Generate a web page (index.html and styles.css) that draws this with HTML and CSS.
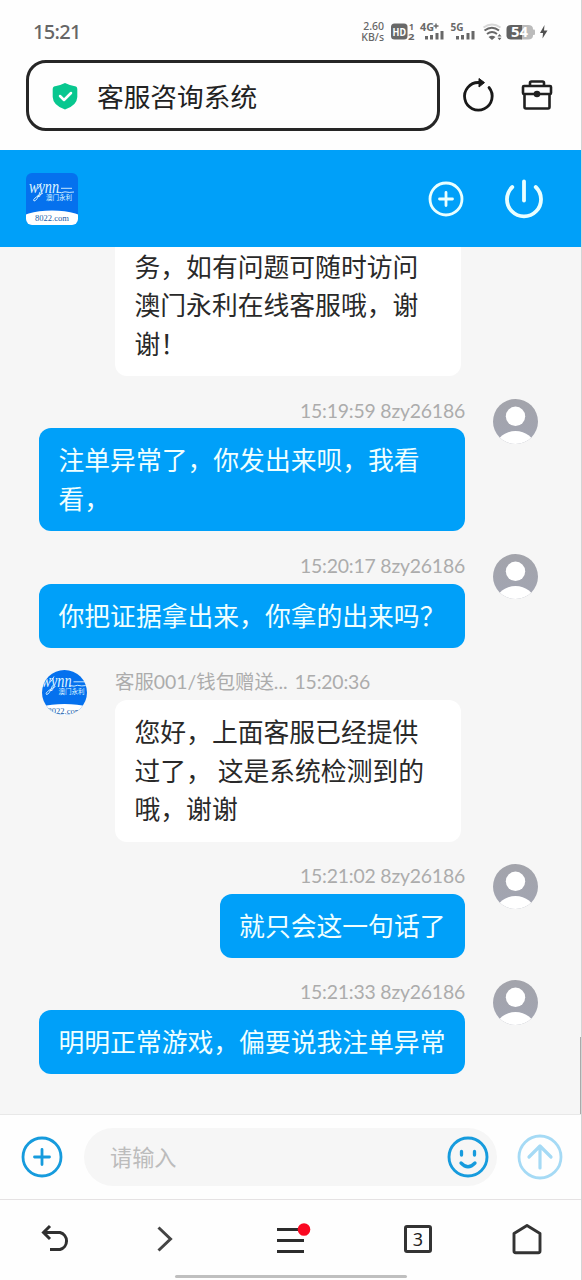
FILE: index.html
```html
<!DOCTYPE html>
<html lang="zh-CN">
<head>
<meta charset="utf-8">
<title>客服咨询系统</title>
<link rel="stylesheet" href="styles.css">
</head>
<body>
<svg width="0" height="0" class="defs">
  <defs>
    <linearGradient id="grey" x1="0" y1="0" x2="0" y2="1"><stop offset="0" stop-color="#a3a4ab"/><stop offset="1" stop-color="#a2a5b2"/></linearGradient>
    <clipPath id="round"><circle cx="22.5" cy="22.5" r="22.5"/></clipPath>
    <clipPath id="tile"><rect width="52" height="52" rx="6"/></clipPath>
    <symbol id="user" viewBox="0 0 45 45">
      <g clip-path="url(#round)"><rect width="45" height="45" fill="url(#grey)"/><circle cx="22.5" cy="17.3" r="9.7" fill="#fff"/><ellipse cx="22.5" cy="47" rx="19" ry="15" fill="#fff"/></g>
    </symbol>
    <symbol id="brand" viewBox="0 0 52 52">
      <rect width="52" height="52" fill="#0571ee"/>
      <ellipse cx="26" cy="48" rx="33" ry="10.5" fill="#fff"/>
      <text class="brand-script" x="3" y="20" textLength="30" lengthAdjust="spacingAndGlyphs">wynn</text>
      <path d="M14 19 Q11 28 8 28 Q5.500 26 17 20 M11.500 16 Q14 13 15.500 10 M31 19 Q36 20.500 39 18.800 Q43 20 48 19 M35 15.300 H46" fill="none" stroke="#dff5ff" stroke-width=".9"/>
      <text class="brand-cn" x="20" y="27" textLength="26">澳门永利</text>
      <text class="brand-site" x="9" y="47.500" textLength="34" lengthAdjust="spacingAndGlyphs">8022.com</text>
    </symbol>
  </defs>
</svg>
<div class="screen">
  <header class="status">
    <span class="clock">15:21</span>
    <span class="speed"><span>2.60</span><span>KB/s</span></span>
    <svg class="signals" width="170" height="26" viewBox="0 0 170 26">
      <g fill="#686868">
        <rect x="1" y="4.500" width="16.500" height="16" rx="3.500"/>
        <text x="2.500" y="16.500" fill="#fff" font-size="11" font-weight="700" textLength="13.500" lengthAdjust="spacingAndGlyphs">HD</text>
        <text x="19" y="10.500" font-size="8.500" font-weight="700">1</text>
        <text x="18" y="20.500" font-size="8.500" font-weight="700" textLength="6.500" lengthAdjust="spacingAndGlyphs">2</text>
        <text x="30" y="12" font-size="10.500" font-weight="700" textLength="14" lengthAdjust="spacingAndGlyphs">4G</text>
        <path d="M46 4.500v5M43.500 7h5" stroke="#686868" stroke-width="1.400"/>
        <path d="M35 17h3v3.500h-3zM40 16h3v4.500h-3zM45.500 14h3v6.500h-3zM50.500 12h3v8.500h-3z"/>
        <text x="60.500" y="12" font-size="10.500" font-weight="700" textLength="13" lengthAdjust="spacingAndGlyphs">5G</text>
        <path d="M66 17h3v3.500h-3zM71 16h3v4.500h-3zM76.500 14h3v6.500h-3zM81.500 12h3v8.500h-3z"/>
        <path d="M98.500 18 Q102 15.500 105.500 18 L102 21z"/>
        <path d="M107.500 17.500 l2-2.500 2 2.500z M107.500 18.800 l2 2.500 2-2.500z"/>
      </g>
      <path d="M93.500 8.500 Q102 2.500 110.500 8.500" fill="none" stroke="#d8d8d8" stroke-width="2"/>
      <path d="M94.500 11.500 Q102 6 109 11.500 M97 15 Q102 11 107 15" fill="none" stroke="#686868" stroke-width="2"/>
      <path d="M131 6 H138 q5 0 5 4 v6.500 q0 4-5 4 H131z" fill="#bbb"/>
      <rect x="142.500" y="10.500" width="2.500" height="5.500" rx="1" fill="#bbb"/>
      <path d="M132 6 H121 q-4.500 0-4.500 4 v6.500 q0 4 4.500 4 H132z" fill="#626262"/>
      <text x="121" y="18.200" fill="#fff" font-size="13.500" font-weight="700" textLength="17" lengthAdjust="spacingAndGlyphs">54</text>
      <path d="M154.500 6 L150 14 H153 L152.500 19.500 L157.500 11.500 H154z" fill="#505050"/>
    </svg>
  </header>
  <div class="address-row">
    <div class="address">
      <svg width="26" height="28" viewBox="0 0 26 28"><path d="M13 1 Q19 4 24 4.500 Q25.300 5 25.300 7 V15 Q25 23.500 13 27.500 Q1 23.500 .7 15 V7 Q.7 5 2 4.500 Q7 4 13 1z" fill="#08c78f"/><path d="M8 14 l4 4 7-7" fill="none" stroke="#fff" stroke-width="2.500" stroke-linecap="round" stroke-linejoin="round"/></svg>
      <span>客服咨询系统</span>
    </div>
    <svg class="reload" width="34" height="36" viewBox="0 0 34 36"><path d="M28 9.500 A13.800 13.800 0 1 1 18 4.500" fill="none" stroke="#191919" stroke-width="2.800" stroke-linecap="round"/><path d="M18 .5 L23.500 4.600 L18 9z" fill="#191919" stroke="#191919" stroke-linejoin="round"/></svg>
    <svg class="toolbox" width="32" height="32" viewBox="0 0 32 32"><g fill="none" stroke="#202020" stroke-width="2.600" stroke-linejoin="round"><path d="M9 7 V4 Q9 2.500 10.500 2.500 H21.500 Q23 2.500 23 4 V7"/><rect x="2" y="7" width="28" height="8" rx="1"/><path d="M3.500 15 V28 Q3.500 29.500 5 29.500 H27 Q28.500 29.500 28.500 28 V15"/></g><circle cx="16" cy="15" r="3.300" fill="#202020"/></svg>
  </div>
  <div class="service-bar">
    <svg class="tile" width="52" height="52"><g clip-path="url(#tile)"><use href="#brand" width="52" height="52"/></g></svg>
    <svg class="add" width="36" height="36" viewBox="0 0 36 36"><g fill="none" stroke="#e9ffff" stroke-width="2.800" stroke-linecap="round"><circle cx="18" cy="18" r="16"/><path d="M11.500 18h13M18 11.500v13"/></g></svg>
    <svg class="power" width="40" height="40" viewBox="0 0 40 40"><g fill="none" stroke="#e9ffff" stroke-width="3.800" stroke-linecap="round"><path d="M8.300 8 A17 17 0 1 0 31.700 8"/><path d="M20 2.500v19"/></g></svg>
  </div>
  <main class="chat">
    <div class="bubble agent first">务，如有问题可随时访问<br>澳门永利在线客服哦，谢<br>谢！</div>
    <section class="row mine"><div class="body"><div class="meta">15:19:59 8zy26186</div><div class="bubble wide">注单异常了，你发出来呗，我看<br>看，</div></div><svg class="avatar"><use href="#user"/></svg></section>
    <section class="row mine"><div class="body"><div class="meta">15:20:17 8zy26186</div><div class="bubble wide">你把证据拿出来，你拿的出来吗？</div></div><svg class="avatar"><use href="#user"/></svg></section>
    <section class="row theirs"><svg class="avatar"><g clip-path="url(#round)"><use href="#brand" x="-3.500" y="-3.500" width="52" height="52"/></g></svg><div class="body"><div class="meta"><span class="agent-name">客服001/钱包赠送...</span><span>15:20:36</span></div><div class="bubble agent">您好，上面客服已经提供<br>过了， 这是系统检测到的<br>哦，谢谢</div></div></section>
    <section class="row mine"><div class="body"><div class="meta">15:21:02 8zy26186</div><div class="bubble">就只会这一句话了</div></div><svg class="avatar"><use href="#user"/></svg></section>
    <section class="row mine"><div class="body"><div class="meta">15:21:33 8zy26186</div><div class="bubble wide">明明正常游戏，偏要说我注单异常</div></div><svg class="avatar"><use href="#user"/></svg></section>
  </main>
  <div class="composer">
    <svg width="42" height="42" viewBox="0 0 42 42"><g fill="none" stroke="#169bdd" stroke-width="2.800" stroke-linecap="round"><circle cx="21" cy="21" r="19"/><path d="M13.500 21h15M21 13.500v15"/></g></svg>
    <div class="field"><span>请输入</span>
      <svg width="42" height="42" viewBox="0 0 42 42"><g fill="none" stroke="#169bdd" stroke-width="2.900" stroke-linecap="round"><circle cx="21" cy="21" r="19"/><path d="M14.500 15.500v3.500M27.500 15.500v3.500M14 27 Q21 34.500 28 27" stroke-width="3.300"/></g></svg>
    </div>
    <svg class="send" width="46" height="46" viewBox="0 0 46 46"><g fill="none" stroke="#a5daf5" stroke-width="2.800" stroke-linecap="round" stroke-linejoin="round"><circle cx="23" cy="23" r="21"/><path d="M12 23 L23 12 L34 23M23 12v22" stroke-width="3.200"/></g></svg>
  </div>
  <nav class="tabs">
    <svg width="30" height="32" viewBox="0 0 30 32"><path d="M9 3 L2.500 9.500 L9 16 M3 9.500 H19 A8.800 8.800 0 0 1 19 26.500 H9" fill="none" stroke="#303030" stroke-width="3"/></svg>
    <svg class="forward" width="18" height="28" viewBox="0 0 18 28"><path d="M2.500 2.500 L14.500 14 L2.500 25.500" fill="none" stroke="#444" stroke-width="3"/></svg>
    <svg class="menu" width="36" height="36" viewBox="0 0 36 36"><path d="M1 8.500h27M1 19.500h27M1 30.500h27" stroke="#2c2c2c" stroke-width="3"/><circle cx="28" cy="8.500" r="6.300" fill="#fa0821"/></svg>
    <span class="count">3</span>
    <svg class="home" width="30" height="32" viewBox="0 0 30 32"><path d="M15 2.500 L28 10.500 V28 Q28 29.700 26.300 29.700 H3.700 Q2 29.700 2 28 V10.500z" fill="none" stroke="#333" stroke-width="2.900" stroke-linejoin="round"/></svg>
  </nav>
  <i class="home-bar"></i>
  <i class="scroll-thumb"></i>
</div>
</body>
</html>
```

FILE: styles.css
```css
* { box-sizing: border-box; }
body { margin: 0; font-family: Lato, "Noto Sans CJK SC", sans-serif; background: #fefefe; }
svg { display: block; flex: none; }
.defs { position: absolute; }
.screen { position: relative; width: 582px; height: 1280px; display: flex; flex-direction: column; overflow: hidden; border-right: 1px solid #d4d4d4; }
.status { height: 60px; flex: none; display: flex; align-items: flex-start; padding: 19px 0 0 33px; color: #666; }
.clock { font: 500 20px/25px "Noto Sans", sans-serif; width: 325px; letter-spacing: -.7px; }
.speed { width: 26px; display: flex; flex-direction: column; align-items: flex-end; font: 500 10.5px/10.5px "Noto Sans", sans-serif; margin-top: 2px; }
.signals { margin-left: 6px; font-family: "Noto Sans", sans-serif; }
.address-row { height: 90px; flex: none; display: flex; padding-left: 26px; }
.address { width: 414px; height: 71px; border: 3px solid #262626; border-radius: 20px; display: flex; align-items: center; padding-left: 23px; gap: 19px; font-family: "Noto Sans CJK SC", sans-serif; font-size: 26.7px; line-height: 40px; color: #222; }
.reload { margin: 18px 0 0 21px; }
.toolbox { margin: 19px 0 0 26px; }
.service-bar { height: 97px; flex: none; background: #00a0f9; display: flex; align-items: center; padding-left: 26px; }
.add { margin-left: 350px; }
.power { margin-left: 39.5px; }
.brand-script { font: italic 19px "Liberation Serif", serif; fill: #dff5ff; }
.brand-cn { font: 6.5px "Noto Sans CJK SC", sans-serif; fill: #dff5ff; }
.brand-site { font: 8px "Liberation Serif", serif; fill: #175ba8; }
.chat { height: 867px; flex: none; background: #f6f6f6; overflow: hidden; display: flex; flex-direction: column; gap: 22.5px; }
.row { display: flex; flex: none; align-items: flex-start; }
.mine { justify-content: flex-end; gap: 28px; padding-right: 43px; }
.theirs { gap: 28px; padding-left: 42px; }
.avatar { width: 45px; height: 45px; }
.body { display: flex; flex-direction: column; }
.mine .body { align-items: flex-end; }
.meta { height: 29.6px; line-height: 23px; font-size: 19.4px; letter-spacing: -.2px; color: #acacac; white-space: pre; display: flex; gap: 7px; }
.agent-name { letter-spacing: 0; }
.bubble { background: #00a0f9; color: #f0ffff; border-radius: 12px; padding: 12px 19.5px 13.4px; font: 25.8px/38.8px "Noto Sans CJK SC", sans-serif; white-space: nowrap; }
.wide { width: 426px; }
.agent { width: 346px; background: #fff; color: #292929; }
.first { flex: none; margin: -12.4px 0 0 115px; }
.composer { height: 86px; flex: none; border-top: 1px solid #e8e8e8; border-bottom: 1px solid #e5e2e3; display: flex; align-items: center; padding-left: 21px; background: #fefefe; }
.field { width: 413px; height: 58px; border-radius: 29px; background: #f6f6f6; margin: 0 20px 0 21px; padding: 0 8px 0 26px; display: flex; align-items: center; justify-content: space-between; font: 22.2px/32px "Noto Sans CJK SC", sans-serif; color: #bcbcbc; }
.field span { padding-bottom: 3px; }
.tabs { height: 80px; flex: none; display: flex; align-items: center; padding: 0 0 2px 41px; }
.forward { margin-left: 85px; }
.menu { margin-left: 102px; }
.count { margin-left: 92px; width: 28px; height: 28px; border: 3px solid #333; border-radius: 3px; font: 18px/22px "Noto Sans", sans-serif; text-align: center; color: #222; }
.home { margin-left: 80px; }
.home-bar { position: absolute; left: 175px; top: 1275px; width: 232px; height: 3px; background: #bfbfbf; border-radius: 2px; }
.scroll-thumb { position: absolute; right: -1px; top: 1037px; width: 2px; height: 77px; background: #aaa; }
```
